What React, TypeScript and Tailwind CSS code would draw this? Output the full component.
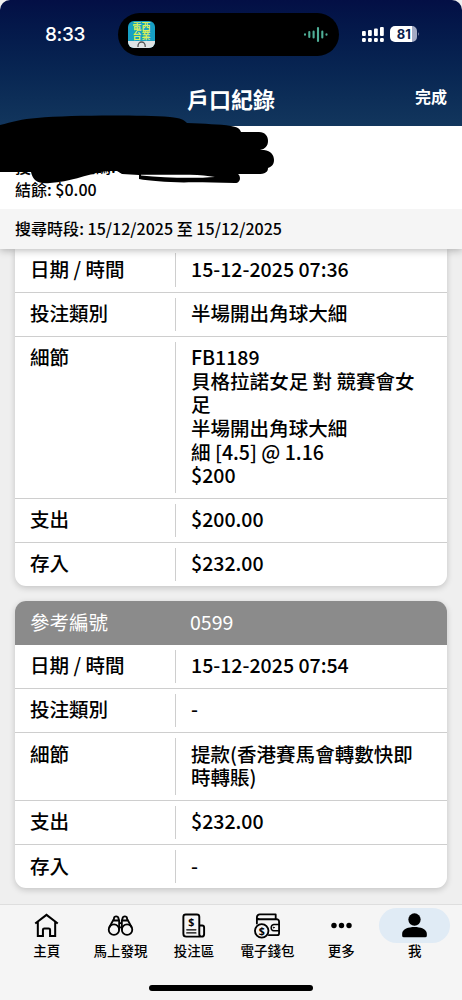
import React from "react";

type Entry = { label: string; lines: string[] };

const first: Entry[] = [
  { label: "日期 / 時間", lines: ["15-12-2025 07:36"] },
  { label: "投注類別", lines: ["半場開出角球大細"] },
  { label: "細節", lines: ["FB1189", "貝格拉諾女足 對 競賽會女足", "半場開出角球大細", "細 [4.5] @ 1.16", "$200"] },
  { label: "支出", lines: ["$200.00"] },
  { label: "存入", lines: ["$232.00"] },
];

const second: Entry[] = [
  { label: "日期 / 時間", lines: ["15-12-2025 07:54"] },
  { label: "投注類別", lines: ["-"] },
  { label: "細節", lines: ["提款(香港賽馬會轉數快即時轉賬)"] },
  { label: "支出", lines: ["$232.00"] },
  { label: "存入", lines: ["-"] },
];

function Rows({ entries }: { entries: Entry[] }) {
  return (
    <>
      {entries.map((e, i) => (
        <div key={e.label} className={"flex py-[5px] " + (i < entries.length - 1 ? "border-b border-[#cecece]" : "")}>
          <div className="w-[161px] shrink-0 border-r border-[#cecece] pb-[6.2px] pl-[15px] pt-[3.4px]">{e.label}</div>
          <div className="flex-1 pb-[6.2px] pl-[15px] pr-[30px] pt-[3.4px]">
            {e.lines.map((l) => (
              <div key={l}>{l}</div>
            ))}
          </div>
        </div>
      ))}
    </>
  );
}

function StatusBar() {
  return (
    <div className="flex h-[70px] items-start">
      <div className="w-[118px] pl-[45px] pt-[20px] font-['Inter'] text-[19px] font-medium leading-[30px] tracking-[-0.4px]">8:33</div>
      <div className="mt-[13px] flex h-[43px] w-[221px] items-center justify-between rounded-full bg-black pl-[10px] pr-[10px]">
        <div className="flex h-[27px] w-[27px] flex-col overflow-hidden rounded-[6px] bg-[#169fc4]">
          <div className="h-[20px] pt-[1px] text-center text-[9px] font-bold leading-[9px] text-[#d9ee5b]">
            <div>電西</div>
            <div>台業</div>
          </div>
          <svg className="h-[7px] w-[27px] bg-[#dfe3e4]" viewBox="0 0 27 7" fill="none" stroke="#555" strokeWidth="1.3">
            <path d="M10 6V5a3.600 4 0 0 1 7.200 0v1" />
          </svg>
        </div>
        <svg width="26" height="17" viewBox="0 0 26 17" stroke="#4fae97" strokeWidth="2.1" strokeLinecap="round">
          <path d="M2 8.300v.4M6.300 6v5M10.600 5.500v6M15 2v13M19.300 5.500v6M23.500 8.300v.4" />
        </svg>
      </div>
      <svg className="ml-[22px] mt-[25px]" width="62" height="19" viewBox="0 0 62 19">
        <g fill="#fff">
          <rect x="1" y="6" width="3.8" height="5" rx="1" />
          <rect x="7" y="5" width="3.8" height="6" rx="1" />
          <rect x="13" y="3.5" width="3.8" height="7.5" rx="1" />
          <rect x="19" y="2" width="3.8" height="9" rx="1" />
          <rect x="1" y="13" width="3.8" height="4" rx="1.2" />
          <rect x="7" y="13" width="3.8" height="4" rx="1.2" />
          <rect x="13" y="13" width="3.8" height="4" rx="1.2" />
          <rect x="19" y="13" width="3.8" height="4" rx="1.2" />
          <path d="M34 1h17v16H34a5 5 0 0 1-5-5V6a5 5 0 0 1 5-5Z" />
        </g>
        <path d="M51 1a5 5 0 0 1 5 5v6a5 5 0 0 1-5 5ZM57.300 7q1.500 2 0 4Z" fill="#a3abc4" />
        <text x="42.8" y="13.7" textAnchor="middle" fontFamily="Inter" fontSize="13" fontWeight="700" fill="#0a1d4b">81</text>
      </svg>
    </div>
  );
}

function Scribble() {
  return (
    <svg className="absolute left-0 top-0 z-30" width="290" height="200" viewBox="0 0 290 200">
      <path d="M0 125C12 122 22 119 37 118C72 115 138 115 170 117C181 118 184 120 187 123C205 124 219 124 231 126C238 127 240 129 241 132H259C265 132 268 136 268 141C268 146 265 149 260 150H264C271 151 274 155 274 160C274 165 271 167 268 168C268 172 265 174 258 174H238C241 176 241 183 235 183C215 183 199 182 184 182.500C166 182 149 181 139 179V175L122 174L117 171H106C84 175 70 182 50 183C38 184 33 181 31 172H0Z" />
      <path d="M141 174.800H190C200 175 208 176 215 177C195 178.500 165 178 141 175.500Z" fill="#fff" />
    </svg>
  );
}

const stroke = { fill: "none", stroke: "#000", strokeWidth: 2, strokeLinejoin: "round" as const, strokeLinecap: "round" as const };

const tabs = [
  {
    name: "主頁",
    icon: (
      <path
        {...stroke}
        strokeWidth={2.1}
        strokeLinejoin="miter"
        strokeLinecap="butt"
        d="M2.300 12 14 3 25.700 12M5 10V25H10.300V18.500A1.500 1.500 0 0 1 11.800 17H16.200A1.500 1.500 0 0 1 17.700 18.500V25H23V10"
      />
    ),
  },
  {
    name: "馬上發現",
    icon: (
      <g {...stroke} strokeWidth={1.9}>
        <circle cx="7.2" cy="18.3" r="5.4" />
        <circle cx="20.8" cy="18.3" r="5.4" />
        <path d="M2.600 15.500 6.800 7.800M12.600 18V8.500M15.400 18V8.500M25.400 15.500 21.200 7.800M6.800 8.800 7.500 5.300Q9.500 3.800 11.500 5.300L12.600 8.800ZM21.200 8.800 20.500 5.300Q18.500 3.800 16.500 5.300L15.400 8.800ZM12.600 11.500H15.400M12.600 16H15.400" />
      </g>
    ),
  },
  {
    name: "投注區",
    icon: (
      <g {...stroke}>
        <path d="M20 25.500H6.500A3 3 0 0 1 3.500 22.500V5A2.500 2.500 0 0 1 6 2.500H17.500A2.500 2.500 0 0 1 20 5V23A2.500 2.500 0 0 0 25 23V16A2 2 0 0 0 23 14H20" />
        <path strokeWidth="1.3" d="M7 18.500H16.500M7 21.700H16.500" />
        <text x="11.8" y="14.5" textAnchor="middle" fontFamily="Noto Sans" fontSize="11" fontWeight="700" stroke="none" fill="#000">$</text>
      </g>
    ),
  },
  {
    name: "電子錢包",
    icon: (
      <g {...stroke} strokeWidth={1.9}>
        <path d="M3 12V5.500A3 3 0 0 1 6 2.500H22.500V7.500M3 6.500Q4 7.500 6 7.500H23.500A2.500 2.500 0 0 1 26 10V22A2 2 0 0 1 24 24H15.500" />
        <path d="M26 13H20.500A3.300 3.300 0 0 0 20.500 19.500H26" strokeWidth="1.5" />
        <circle cx="20.5" cy="16.2" r=".6" fill="#000" strokeWidth=".6" />
        <circle cx="8" cy="19.5" r="7" fill="#f5f5f5" />
        <text x="8" y="23.5" textAnchor="middle" fontFamily="Noto Sans" fontSize="11" fontWeight="700" stroke="none" fill="#000">$</text>
      </g>
    ),
  },
  {
    name: "更多",
    icon: (
      <g>
        <circle cx="6.2" cy="14" r="2.8" />
        <circle cx="14" cy="14" r="2.8" />
        <circle cx="21.8" cy="14" r="2.8" />
      </g>
    ),
  },
  {
    name: "我",
    icon: (
      <g>
        <circle cx="14" cy="7.8" r="6.4" />
        <path d="M1.200 24.500V22.500C1.200 17.500 8 15.500 14 15.500S26.800 17.500 26.800 22.500V24.500A1.800 1.800 0 0 1 25 26.300H3A1.800 1.800 0 0 1 1.200 24.500Z" />
      </g>
    ),
  },
];

export default function App() {
  return (
    <div className="relative flex h-[1000px] w-[462px] flex-col overflow-hidden bg-[#efefef] font-['Noto_Sans_CJK_TC','Noto_Sans_CJK_HK',sans-serif] font-medium text-black">
      <header className="h-[126px] shrink-0 rounded-t-[10px] bg-linear-to-b from-[#030f45] to-[#12365d] text-white">
        <StatusBar />
        <div className="flex h-[56px] items-center">
          <div className="w-[80px]" />
          <h1 className="flex-1 pb-px text-center text-[22px] font-bold leading-[32px]">戶口紀錄</h1>
          <div className="w-[80px] pb-[4px] pr-[15px] text-right text-[16px] font-bold leading-[24px]">完成</div>
        </div>
      </header>

      <section className="relative z-20 h-[83px] shrink-0 bg-white pl-[15px] pt-[29px] text-[16px] leading-[23px]">
        <div>投注戶口號碼:</div>
        <div>結餘: $0.00</div>
      </section>

      <section className="relative z-10 h-[40px] shrink-0 bg-[#f5f5f5] pl-[15px] pt-[8px] text-[16.05px] leading-[23px] shadow-[0_1px_8px_rgba(0,0,0,0.3)]">
        搜尋時段: 15/12/2025 至 15/12/2025
      </section>

      <main className="flex h-[655px] shrink-0 flex-col gap-[14.6px] px-[15px] text-[19.55px] leading-[23.6px]">
        <article className="-mt-[0.6px] rounded-b-[11px] bg-white shadow-[0_2px_6px_rgba(0,0,0,0.18)]">
          <Rows entries={first} />
        </article>
        <article className="rounded-[11px] bg-white shadow-[0_2px_6px_rgba(0,0,0,0.18)]">
          <div className="flex h-[44px] rounded-t-[11px] bg-[#8b8b8b] pt-[9px] font-normal text-white">
            <div className="w-[175px] pl-[15px]">參考編號</div>
            <div>0599</div>
          </div>
          <Rows entries={second} />
        </article>
      </main>

      <nav className="flex h-[96px] shrink-0 flex-col border-t border-[#dedede] bg-[#f5f5f5]">
        <div className="flex h-[80px] pl-[10px] pt-[3px]">
          {tabs.map((t) => (
            <div key={t.name} className="flex w-[73.6px] flex-col items-center">
              <div className={"flex h-[35px] w-[71px] items-center justify-center rounded-full " + (t.name === "我" ? "bg-[#e0ebf5]" : "")}>
                <svg width="27" height="27" viewBox="0 0 28 28">{t.icon}</svg>
              </div>
              <div className="-mt-[2px] text-[13.5px] leading-[18px]">{t.name}</div>
            </div>
          ))}
        </div>
        <div className="mx-auto h-[6px] w-[164px] shrink-0 rounded-full bg-black" />
      </nav>

      <Scribble />
    </div>
  );
}
